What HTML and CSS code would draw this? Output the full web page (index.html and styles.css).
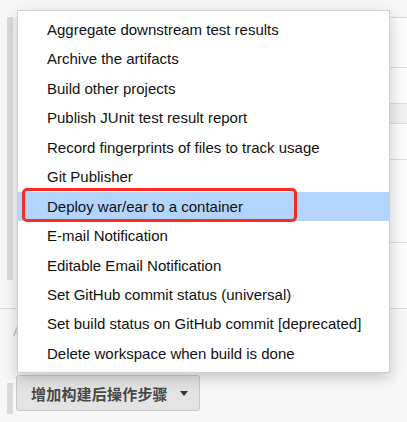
FILE: index.html
```html
<!DOCTYPE html>
<html>
<head>
<meta charset="utf-8">
<link rel="stylesheet" href="styles.css">
</head>
<body>
<div class="page">
  <div class="section">
    <div class="side-bar"></div>
    <div class="rows">
      <div class="row r1"></div>
      <div class="row r2"></div>
      <div class="row r3"></div>
      <div class="row r4"></div>
      <div class="row r5"></div>
      <div class="row r6"></div>
    </div>
  </div>
  <div class="helper"><span class="helper-text">A</span></div>
  <div class="button-row">
    <div class="side-bar short"></div>
    <button class="add-btn">增加构建后操作步骤<span class="caret"></span></button>
  </div>

  <ul class="menu">
    <li class="item">Aggregate downstream test results</li>
    <li class="item">Archive the artifacts</li>
    <li class="item">Build other projects</li>
    <li class="item">Publish JUnit test result report</li>
    <li class="item">Record fingerprints of files to track usage</li>
    <li class="item">Git Publisher</li>
    <li class="item active">Deploy war/ear to a container<span class="mark"></span></li>
    <li class="item">E-mail Notification</li>
    <li class="item">Editable Email Notification</li>
    <li class="item">Set GitHub commit status (universal)</li>
    <li class="item">Set build status on GitHub commit [deprecated]</li>
    <li class="item">Delete workspace when build is done</li>
  </ul>
</div>
</body>
</html>
```

FILE: styles.css
```css
html, body {
  margin: 0;
  padding: 0;
}
body {
  background: #f7f7f7;
  font-family: "Liberation Sans", Arial, sans-serif;
  width: 407px;
  height: 422px;
  overflow: hidden;
}
.page {
  position: relative;
  padding-top: 17px;
}
.section {
  display: flex;
  height: 291px;
  border-bottom: 1px solid #dcdcdc;
}
.side-bar {
  width: 6px;
  margin-left: 7px;
  height: 263px;
  background: #dadada;
  flex: none;
}
.rows {
  flex: 1;
  margin-left: 4px;
  background: #fbfbfb;
}
.row {
  border-top: 1px solid #dcdcdc;
  box-sizing: border-box;
}
.r1 { height: 50px; }
.r2 { height: 36px; }
.r3 { height: 20px; background: #f0f0f0; }
.r4 { height: 36px; }
.r5 { height: 83px; }
.r6 { height: 66px; }
.helper {
  height: 65px;
  padding: 15px 0 0 13px;
  box-sizing: border-box;
}
.helper-text {
  display: block;
  width: 4px;
  overflow: hidden;
  font-size: 13px;
  color: #b5b5b5;
}
.button-row {
  display: flex;
  align-items: flex-start;
}
.side-bar.short {
  height: 31px;
  margin-top: 9px;
}
.add-btn {
  margin-left: 3px;
  margin-top: 1px;
  width: 184px;
  height: 36px;
  box-sizing: border-box;
  border: 1px solid #c8c8c8;
  border-radius: 3px;
  background: #e3e3e3;
  font-family: "Noto Sans CJK SC", "Liberation Sans", sans-serif;
  font-size: 15px;
  font-weight: 700;
  color: #484848;
  text-align: left;
  padding: 0 0 0 14px;
  display: flex;
  align-items: center;
  letter-spacing: 0.2px;
}
.caret {
  display: inline-block;
  margin-left: 12px;
  width: 0;
  height: 0;
  border-left: 4px solid transparent;
  border-right: 4px solid transparent;
  border-top: 5px solid #333;
}
.menu {
  position: absolute;
  left: 17px;
  top: 10px;
  width: 373px;
  box-sizing: border-box;
  margin: 0;
  padding: 4px 0;
  list-style: none;
  background: #fff;
  border: 1px solid #cfcfcf;
  box-shadow: 0 5px 14px rgba(0, 0, 0, 0.2);
}
.item {
  position: relative;
  height: 29.45px;
  line-height: 29.45px;
  padding-left: 29px;
  font-size: 15px;
  color: #111;
  white-space: nowrap;
}
.item.active {
  background: #b3d4fc;
}
.mark {
  position: absolute;
  left: 4px;
  top: -4px;
  width: 275px;
  height: 34px;
  box-sizing: border-box;
  border: 3px solid #ff2a1f;
  border-radius: 5px;
}
```
